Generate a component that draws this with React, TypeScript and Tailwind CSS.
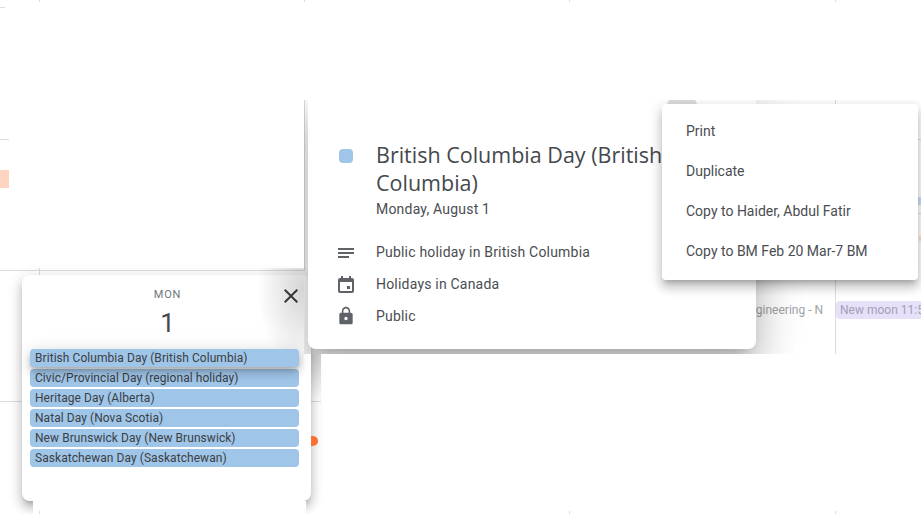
const chips = [
  "British Columbia Day (British Columbia)",
  "Civic/Provincial Day (regional holiday)",
  "Heritage Day (Alberta)",
  "Natal Day (Nova Scotia)",
  "New Brunswick Day (New Brunswick)",
  "Saskatchewan Day (Saskatchewan)",
];
const menu = ["Print", "Duplicate", "Copy to Haider, Abdul Fatir", "Copy to BM Feb 20 Mar-7 BM"];
const hairs: string[] = [
  "left-[39px] top-0 w-px h-[2px]",
  "left-[304px] top-0 w-px h-[2px]",
  "left-[569px] top-0 w-px h-[2px]",
  "left-[835px] top-0 w-px h-[2px]",
  "left-0 top-[7px] w-[5px] h-px",
  "left-0 top-[139px] w-[9px] h-px",
  "left-[304px] top-[100px] w-px h-[170px]",
  "left-0 top-[270px] w-[305px] h-px",
  "left-[39px] top-[268px] w-px h-[7px]",
  "left-0 top-[401px] w-[321px] h-px",
  "left-[835px] top-[100px] w-px h-[254px]",
  "left-[835px] top-[139px] w-[86px] h-px",
  "left-[835px] top-[213px] w-[86px] h-px",
  "left-[39px] top-[511px] w-px h-[3px]",
  "left-[569px] top-[511px] w-px h-[3px]",
  "left-[835px] top-[511px] w-px h-[3px]",
];

function Row({ icon, text }: { icon: React.ReactNode; text: string }) {
  return (
    <div className="flex h-8 items-center">
      <div className="flex w-[60px] justify-center text-[#5f6368]">{icon}</div>
      <span className="text-sm tracking-[0.2px] text-[#4a4d51]">{text}</span>
    </div>
  );
}

export default function App() {
  return (
    <div className="relative h-[514px] w-[921px] overflow-hidden bg-white font-['Roboto',sans-serif]">
      {hairs.map((c) => (
        <div key={c} className={`absolute bg-[#dadce0] ${c}`} />
      ))}
      <div className="absolute left-0 top-[170px] h-[18px] w-[9px] bg-[#ffd5c2]" />
      <div className="absolute left-[918px] top-[197px] h-[8px] w-[3px] bg-[#cddff0]" />
      <div className="absolute left-[919px] top-[236px] h-[5px] w-[2px] bg-[#f8e2d0]" />

      {/* Day popup */}
      <div className="absolute left-[22px] top-[275px] h-[226px] w-[289px] rounded-lg bg-white pb-2 pl-2 pr-3 pt-3 shadow-[0_8px_10px_1px_rgba(0,0,0,0.14),0_3px_14px_2px_rgba(0,0,0,0.12),0_5px_5px_-3px_rgba(0,0,0,0.2)]">
        <div className="pl-1.5 text-center text-[11px] leading-4 tracking-[0.8px] text-[#70757a]">MON</div>
        <div className="mt-1 pl-1.5 text-center text-[26px] leading-8 text-[#45484c]">1</div>
        <div className="mt-[10px] flex flex-col gap-[2px]">
          {chips.map((c, i) => (
            <div
              key={c}
              className={`h-[18px] rounded bg-[#9fc5e8] pl-[5px] text-xs leading-[18px] tracking-[0.06px] text-[#3c4043] ${i === 0 ? "relative z-10 shadow-[0_3px_5px_-1px_rgba(0,0,0,0.2),0_6px_10px_0_rgba(0,0,0,0.14),0_1px_18px_0_rgba(0,0,0,0.12)]" : ""}`}
            >
              {c}
            </div>
          ))}
        </div>
        <button className="absolute left-[257px] top-[9px] text-[#3c4043]">
          <svg width="24" height="24" viewBox="0 0 24 24" fill="currentColor">
            <path d="M19 6.41 17.59 5 12 10.59 6.41 5 5 6.41 10.59 12 5 17.59 6.41 19 12 13.41 17.59 19 19 17.59 13.41 12z" />
          </svg>
        </button>
      </div>
      <div className="absolute left-[311px] top-[436px] h-[10px] w-[7px] rounded-r-full bg-[#f97030]" />
      <div className="absolute left-[33px] top-[501px] h-[13px] w-[273px] bg-white" />
      <div className="absolute left-[39px] top-[511px] h-[3px] w-px bg-[#dadce0]" />
      <div className="absolute left-[258px] top-[268px] h-[102px] w-[46px] bg-[radial-gradient(ellipse_at_100%_20%,rgba(0,0,0,0.17),rgba(0,0,0,0)_72%)]" />
      <div className="absolute left-[311px] top-[354px] h-[47px] w-[10px] bg-gradient-to-b from-black/20 to-black/0" />

      {/* Clipped layer of the event card and its menu */}
      <div className="absolute left-[304px] top-[100px] h-[254px] w-[617px] overflow-hidden">
        <div className="absolute left-[396px] top-[201px] w-[123px] overflow-hidden whitespace-nowrap text-right text-xs leading-[18px] text-[#a0a3a8]">
          Engineering - N
        </div>
        <div className="absolute left-[532px] top-[201px] h-[18px] w-[100px] whitespace-nowrap rounded bg-[#e6e0f8] pl-1 text-xs leading-[18px] text-[#a49eb8]">
          New moon 11:56
        </div>

        <div className="absolute left-1 top-0 h-[249px] w-[448px] rounded-b-lg bg-white pl-2 pt-[41px] shadow-[0_24px_38px_3px_rgba(0,0,0,0.14),0_9px_46px_8px_rgba(0,0,0,0.12),0_11px_15px_-7px_rgba(0,0,0,0.2)]">
          <div className="flex">
            <div className="flex w-[60px] justify-center pt-2">
              <div className="h-[14px] w-[14px] rounded bg-[#9fc5e8]" />
            </div>
            <div className="w-[352px]">
              <div className="font-['Open_Sans',sans-serif] text-[21.5px] leading-7 text-[#45484c]">
                British Columbia Day (British Columbia)
              </div>
              <div className="mt-[2px] text-sm leading-5 tracking-[0.2px] text-[#4a4d51]">Monday, August 1</div>
            </div>
          </div>
          <div className="mt-[17px]">
            <Row
              text="Public holiday in British Columbia"
              icon={
                <svg width="24" height="24" viewBox="0 0 24 24" fill="currentColor">
                  <path d="M4 8h16v2H4zM4 12h16v2H4zM4 16h11v2H4z" />
                </svg>
              }
            />
            <Row
              text="Holidays in Canada"
              icon={
                <svg width="24" height="24" viewBox="0 0 24 24" fill="currentColor" fillRule="evenodd">
                  <path d="M7 4h2v2h6V4h2v2h1a2 2 0 0 1 2 2v11a2 2 0 0 1-2 2H6a2 2 0 0 1-2-2V8a2 2 0 0 1 2-2h1zM6 10v9h12v-9zM13 14h3v3h-3z" />
                </svg>
              }
            />
            <Row
              text="Public"
              icon={
                <svg width="20" height="20" viewBox="0 0 24 24" fill="currentColor">
                  <path d="M18 8h-1V6c0-2.76-2.24-5-5-5S7 3.24 7 6v2H6c-1.1 0-2 .9-2 2v10c0 1.1.9 2 2 2h12c1.1 0 2-.9 2-2V10c0-1.1-.9-2-2-2zm-6 9c-1.1 0-2-.9-2-2s.9-2 2-2 2 .9 2 2-.9 2-2 2zm3.1-9H8.9V6c0-1.71 1.39-3.1 3.1-3.1 1.71 0 3.1 1.39 3.1 3.1v2z" />
                </svg>
              }
            />
          </div>
        </div>

        <div className="absolute left-[362px] top-[-6px] h-[30px] w-[32px] rounded-full bg-[#dcdcdc]" />

        <div className="absolute left-[358px] top-1 h-[176px] w-[256px] rounded bg-white pb-[9px] pt-[7px] shadow-[0_5px_5px_-3px_rgba(0,0,0,0.2),0_8px_10px_1px_rgba(0,0,0,0.14),0_3px_14px_2px_rgba(0,0,0,0.12)]">
          {menu.map((m) => (
            <div key={m} className="flex h-10 items-center pl-6 text-sm text-[#4a4d51]">
              {m}
            </div>
          ))}
        </div>
      </div>
    </div>
  );
}
